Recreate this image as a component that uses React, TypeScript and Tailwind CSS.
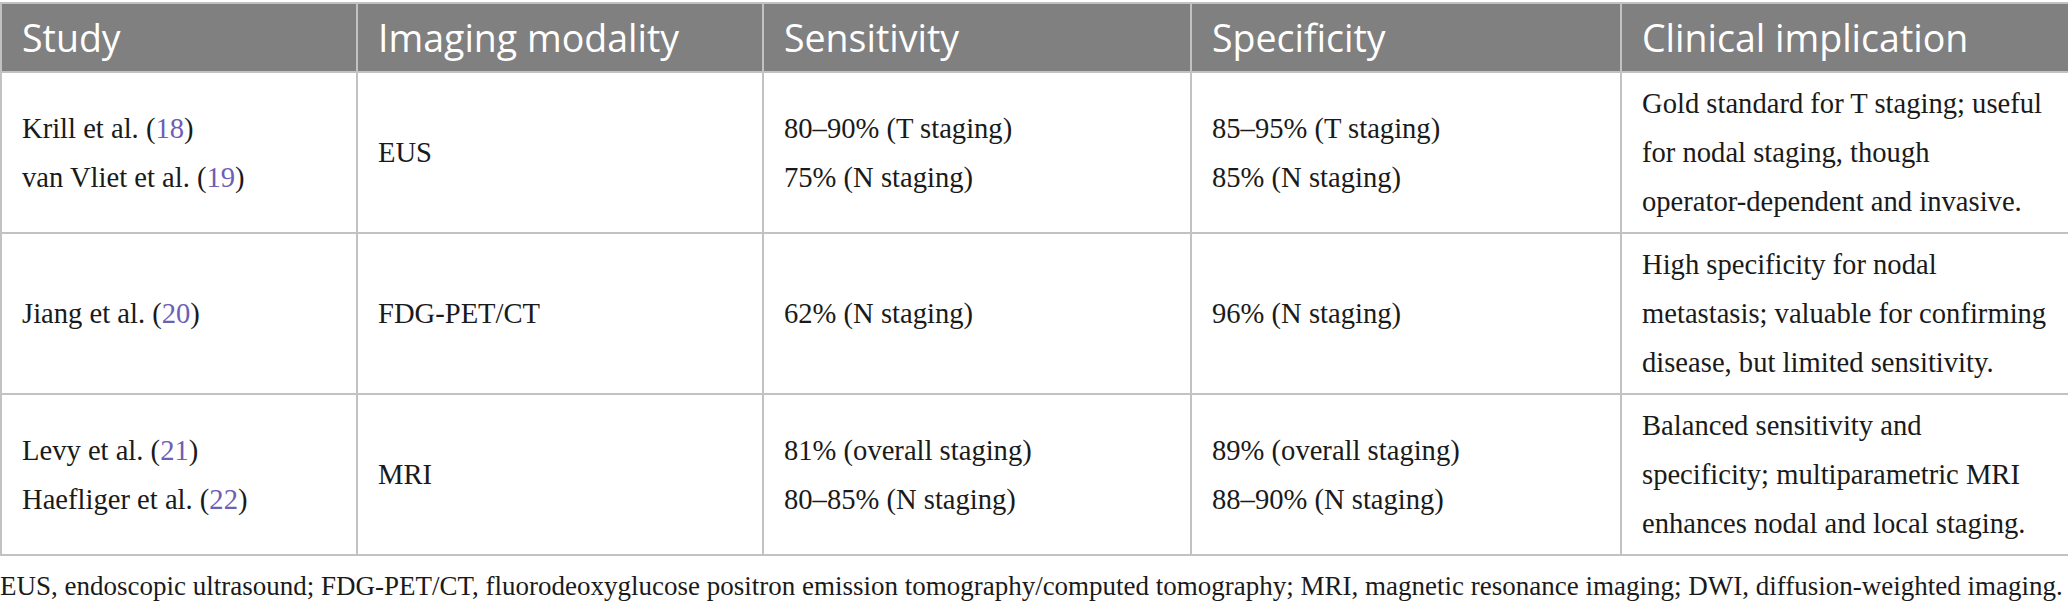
import React from "react";

type Cite = { name: string; ref: string };

type Row = {
  studies: Cite[];
  modality: string;
  sensitivity: string[];
  specificity: string[];
  implication: string[];
};

const rows: Row[] = [
  {
    studies: [
      { name: "Krill et al.", ref: "18" },
      { name: "van Vliet et al.", ref: "19" },
    ],
    modality: "EUS",
    sensitivity: ["80–90% (T staging)", "75% (N staging)"],
    specificity: ["85–95% (T staging)", "85% (N staging)"],
    implication: [
      "Gold standard for T staging; useful",
      "for nodal staging, though",
      "operator-dependent and invasive.",
    ],
  },
  {
    studies: [{ name: "Jiang et al.", ref: "20" }],
    modality: "FDG-PET/CT",
    sensitivity: ["62% (N staging)"],
    specificity: ["96% (N staging)"],
    implication: [
      "High specificity for nodal",
      "metastasis; valuable for confirming",
      "disease, but limited sensitivity.",
    ],
  },
  {
    studies: [
      { name: "Levy et al.", ref: "21" },
      { name: "Haefliger et al.", ref: "22" },
    ],
    modality: "MRI",
    sensitivity: ["81% (overall staging)", "80–85% (N staging)"],
    specificity: ["89% (overall staging)", "88–90% (N staging)"],
    implication: [
      "Balanced sensitivity and",
      "specificity; multiparametric MRI",
      "enhances nodal and local staging.",
    ],
  },
];

const headers = ["Study", "Imaging modality", "Sensitivity", "Specificity", "Clinical implication"];

const serif = "font-['Liberation_Serif','Times_New_Roman',serif]";

function Lines({ items }: { items: string[] }) {
  return (
    <>
      {items.map((t) => (
        <div key={t} className="whitespace-nowrap">
          {t}
        </div>
      ))}
    </>
  );
}

export default function App() {
  return (
    <main className="w-[2068px] bg-white pt-[2px]">
      <table className="w-[2068px] table-fixed border-collapse">
        <colgroup>
          <col className="w-[356px]" />
          <col className="w-[406px]" />
          <col className="w-[428px]" />
          <col className="w-[430px]" />
          <col className="w-[448px]" />
        </colgroup>
        <thead>
          <tr className="h-[69px] bg-[#808080]">
            {headers.map((h) => (
              <th
                key={h}
                className="border-2 border-[#c2c2c2] px-[20px] text-left align-middle font-['Open_Sans',sans-serif] text-[37.5px] font-normal leading-none text-white"
              >
                {h}
              </th>
            ))}
          </tr>
        </thead>
        <tbody className={`${serif} text-[28.6px] leading-[49px] text-[#1a1a1a]`}>
          {rows.map((r) => (
            <tr key={r.modality}>
              <td className="border-2 border-[#c2c2c2] px-[20px] py-[6px] align-middle">
                {r.studies.map((s) => (
                  <div key={s.ref} className="whitespace-nowrap">
                    {s.name} (<span className="text-[#6c5fb5]">{s.ref}</span>)
                  </div>
                ))}
              </td>
              <td className="border-2 border-[#c2c2c2] px-[20px] py-[6px] align-middle">{r.modality}</td>
              <td className="border-2 border-[#c2c2c2] px-[20px] py-[6px] align-middle">
                <Lines items={r.sensitivity} />
              </td>
              <td className="border-2 border-[#c2c2c2] px-[20px] py-[6px] align-middle">
                <Lines items={r.specificity} />
              </td>
              <td className="border-2 border-[#c2c2c2] px-[20px] py-[6px] align-middle">
                <Lines items={r.implication} />
              </td>
            </tr>
          ))}
        </tbody>
      </table>

      <p className={`${serif} mt-[12px] whitespace-nowrap text-[27px] leading-[36px] text-[#1a1a1a]`}>
        EUS, endoscopic ultrasound; FDG-PET/CT, fluorodeoxyglucose positron emission tomography/computed
        tomography; MRI, magnetic resonance imaging; DWI, diffusion-weighted imaging.
      </p>
    </main>
  );
}
